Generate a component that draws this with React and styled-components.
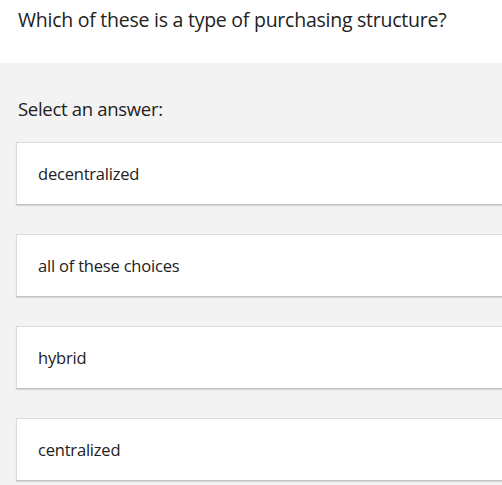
import React from "react";
import styled, { createGlobalStyle } from "styled-components";

const Global = createGlobalStyle`
  html, body { margin: 0; padding: 0; background: #f3f3f3; }
  body { font-family: "Open Sans", "Noto Sans", sans-serif; color: #222; overflow: hidden; }
`;

const Page = styled.div`
  width: 502px;
  height: 485px;
  overflow: hidden;
  background: #f3f3f3;
`;

const Header = styled.div`
  height: 63px;
  background: #ffffff;
  padding: 5px 0 0 18px;
  box-sizing: border-box;
`;

const Question = styled.h1`
  margin: 0;
  font-size: 19.5px;
  font-weight: 400;
  line-height: 30px;
  color: #222;
  letter-spacing: -0.25px;
  white-space: nowrap;
`;

const Body = styled.div`
  padding: 32px 0 0 16px;
`;

const Label = styled.div`
  font-size: 18.5px;
  line-height: 28px;
  padding-left: 2px;
  letter-spacing: -0.3px;
  color: #222;
  margin-bottom: 19px;
`;

const List = styled.div`
  display: flex;
  flex-direction: column;
  gap: 29px;
  margin-right: -20px;
`;

const Choice = styled.div`
  height: 61px;
  background: #fff;
  border: 1px solid #dcdcdc;
  border-bottom-color: #c4c4c4;
  box-shadow: 0 1px 1px rgba(0, 0, 0, 0.12);
  display: flex;
  align-items: center;
  padding-left: 21px;
  font-size: 16.5px;
  letter-spacing: -0.2px;
  color: #222;
`;

const choices = ["decentralized", "all of these choices", "hybrid", "centralized"];

export default function App() {
  return (
    <Page>
      <Global />
      <Header>
        <Question>Which of these is a type of purchasing structure?</Question>
      </Header>
      <Body>
        <Label>Select an answer:</Label>
        <List>
          {choices.map((c) => (
            <Choice key={c}>{c}</Choice>
          ))}
        </List>
      </Body>
    </Page>
  );
}
